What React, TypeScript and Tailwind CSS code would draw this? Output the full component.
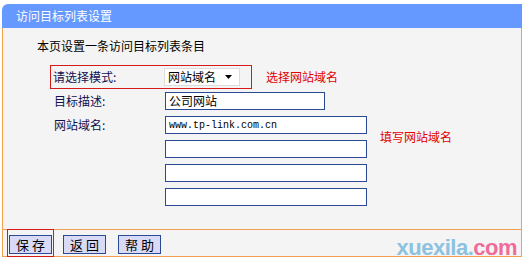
import React from 'react';

const cjk = { fontFamily: '"Noto Sans CJK SC", "Noto Sans", sans-serif' };

const TextBox = ({ value, wide }: { value?: string; wide?: boolean }) => (
  <div
    className={`h-[18px] ${wide ? 'w-[202px]' : 'w-[160px]'} border border-[#2b4a96] bg-white flex items-center px-[3px] text-[12px] text-black leading-none`}
  >
    {value}
  </div>
);

const Btn = ({ label }: { label: string }) => (
  <button className="h-[19px] w-[43px] border border-[#2b4a96] bg-[#d9dbf6] text-[13px] leading-none text-black tracking-[3px] pl-[3px]">
    {label}
  </button>
);

export default function App() {
  return (
    <div className="w-[525px] h-[261px] bg-white pt-[4px] relative overflow-hidden" style={cjk}>
      <div className="ml-[2px] w-[520px]">
        {/* Header */}
        <div className="h-[24px] bg-[#6699ff] rounded-tl-[6px] flex items-center pl-[14px] text-white text-[12px]">
          访问目标列表设置
        </div>

        {/* Body */}
        <div className="h-[201px] bg-[#f4f4f4] border-x border-[#f0a050] pt-[10px]">
          <div className="pl-[34px] text-[12px] leading-[16px] text-black">本页设置一条访问目标列表条目</div>

          <div className="mt-[11px] flex items-center h-[24px]">
            <div className="ml-[47px] w-[202px] h-[24px] border border-[#d41a1a] flex items-center pl-[2px]">
              <span className="w-[111px] text-[12px] text-[#101050]">请选择模式:</span>
              <div className="w-[76px] h-[18px] bg-white border border-[#dcdcdc] flex items-center justify-between pl-[3px] pr-[7px] text-[12px] text-black">
                <span>网站域名</span>
                <svg width="7" height="4" viewBox="0 0 7 4">
                  <path d="M0 0 L7 0 L3.5 4 Z" fill="#000" />
                </svg>
              </div>
            </div>
            <span className="ml-[14px] text-[12px] text-[#e00000]">选择网站域名</span>
          </div>

          <div className="grid grid-cols-[111px_202px_auto] auto-rows-[24px] items-center pl-[51px] text-[12px] text-[#101050]">
            <span>目标描述:</span>
            <TextBox value="公司网站" />
            <span />
            <span>网站域名:</span>
            <div className="h-[18px] w-[202px] border border-[#2b4a96] bg-white flex items-center px-[3px] text-[10px] text-black" style={{ fontFamily: '"Liberation Mono", monospace' }}>
              www.tp-link.com.cn
            </div>
            <span className="row-span-2 self-center pl-[13px] text-[#e00000]">填写网站域名</span>
            <span />
            <TextBox wide />
            <span />
            <TextBox wide />
            <span />
            <span />
            <TextBox wide />
            <span />
          </div>
        </div>

        {/* Footer */}
        <div className="h-[28px] bg-[#f4f4f4] border-x border-y border-[#f0a050] flex items-center pl-[4px]">
          <div className="border border-[#d41a1a] p-[1px]">
            <Btn label="保存" />
          </div>
          <div className="ml-[9px]">
            <Btn label="返回" />
          </div>
          <div className="ml-[12px]">
            <Btn label="帮助" />
          </div>
        </div>
      </div>

      <div className="absolute right-[8px] bottom-[2px] text-[22px] font-bold leading-none tracking-[-0.5px]" style={{ fontFamily: '"Liberation Sans", Arial, sans-serif' }}>
        <span className="text-[#8cc2e0]">xuexila.</span>
        <span className="text-[#f06a9a]">com</span>
      </div>
    </div>
  );
}
